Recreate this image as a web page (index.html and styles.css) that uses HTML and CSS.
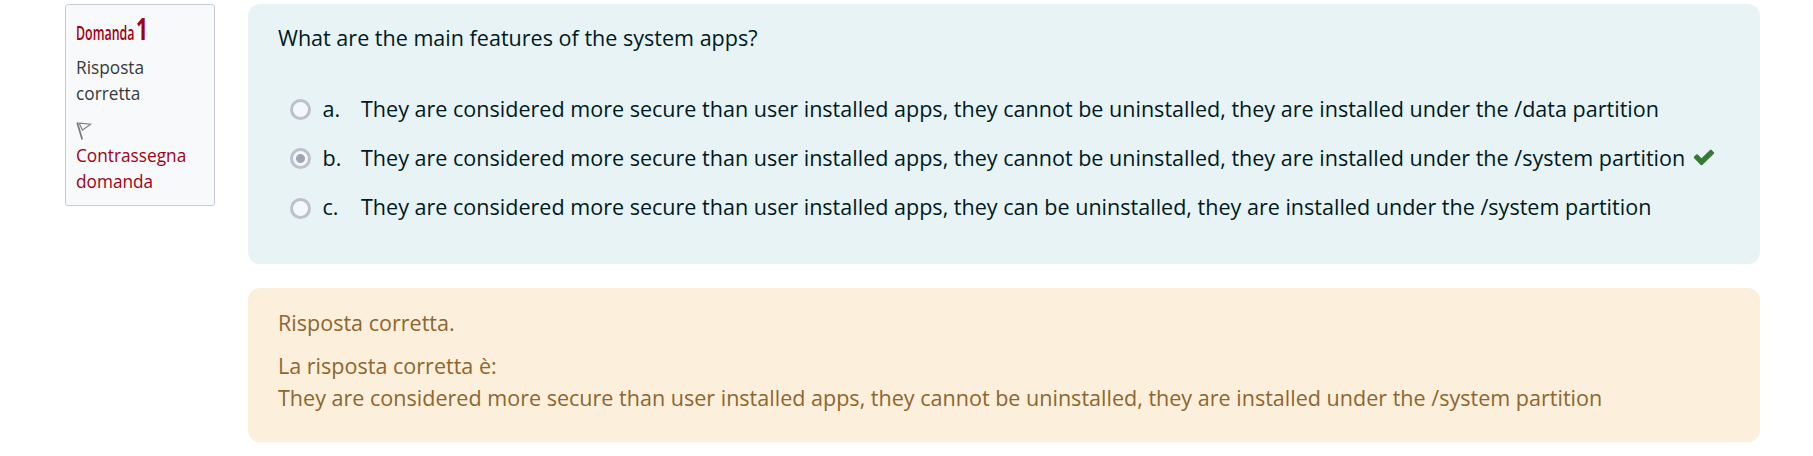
FILE: index.html
```html
<!DOCTYPE html>
<html lang="it">
<head>
<meta charset="utf-8">
<title>Domanda 1</title>
<link rel="stylesheet" href="styles.css">
</head>
<body>
<div class="question">
  <aside class="info">
    <h3 class="number"><span class="label">Domanda</span><span class="digit">1</span></h3>
    <div class="state">Risposta corretta</div>
    <div class="flag">
      <svg class="flag-icon" viewBox="0 0 16 18" width="16" height="18"><path d="M1.200 0.500L6.200 17.500" fill="none" stroke="#777" stroke-width="1.700"/><path d="M3.200 1.200L14.800 2.200L6.400 8Z" fill="none" stroke="#858585" stroke-width="1.200"/></svg>
      <a class="flag-link">Contrassegna domanda</a>
    </div>
  </aside>
  <main class="content">
    <section class="formulation">
      <p class="qtext">What are the main features of the system apps?</p>
      <div class="answers">
        <label class="answer"><span class="radio"></span><span class="letter">a.</span><span class="text">They are considered more secure than user installed apps, they cannot be uninstalled, they are installed under the /data partition</span></label>
        <label class="answer"><span class="radio checked"></span><span class="letter">b.</span><span class="text">They are considered more secure than user installed apps, they cannot be uninstalled, they are installed under the /system partition</span><svg class="check" viewBox="0 0 22 17" width="22" height="17"><path d="M1.200 9.200Q0.400 8.300 1.200 7.500L3.200 5.500Q4 4.800 4.800 5.500L8.500 9.200L17 0.900Q17.800 0.200 18.600 0.900L20.900 3.200Q21.600 4 20.900 4.800L9.300 16Q8.500 16.700 7.700 16Z" fill="#357a32"/></svg></label>
        <label class="answer"><span class="radio"></span><span class="letter">c.</span><span class="text">They are considered more secure than user installed apps, they can be uninstalled, they are installed under the /system partition</span></label>
      </div>
    </section>
    <section class="outcome">
      <p class="feedback">Risposta corretta.</p>
      <p class="right">La risposta corretta è:<br>They are considered more secure than user installed apps, they cannot be uninstalled, they are installed under the /system partition</p>
    </section>
  </main>
</div>
</body>
</html>
```
FILE: styles.css
```css
* { box-sizing: border-box; }
body { margin: 0; background: #fff; font-family: "Open Sans", sans-serif; font-size: 21.56px; line-height: 32px; color: #001a1e; }
p, h3 { margin: 0; }
.question { display: flex; align-items: flex-start; gap: 33px; padding: 4px 53px 0 65px; }
.info { width: 150px; height: 202px; flex: none; border: 1px solid #c5cdd8; border-radius: 3px; background: #f8f9fb; padding: 8px 10px; font-size: 17.25px; line-height: 26px; color: #373a3c; }
.number { display: flex; align-items: baseline; color: #a00014; height: 42px; line-height: 32px; white-space: nowrap; }
.label { font-size: 19.5px; font-weight: 600; transform: scaleX(.635); transform-origin: left; width: 60px; }
.digit { font-size: 30px; font-weight: 700; transform: scaleX(.7); transform-origin: left; }
.flag { margin-top: 15px; }
.flag-icon { display: block; margin-bottom: 3px; }
.flag-link { color: #a00014; }
.content { flex: 1; min-width: 0; }
.formulation { height: 260px; border-radius: 12px; background: #e7f3f5; padding: 18px 30px; }
.answers { margin-top: 30px; padding-left: 12px; }
.answer { display: flex; align-items: center; height: 49px; white-space: nowrap; }
.radio { width: 21px; height: 21px; flex: none; border: 3px solid #bdc1ca; border-radius: 50%; background: #f4f7fb; margin: 2px 11.5px 0 0; }
.answer:last-child .radio { margin-top: 4px; }
.checked { background: radial-gradient(circle, #a2a5b1 4px, #f4f7fb 5px); }
.letter { width: 38.5px; flex: none; }
.check { margin-left: 7.5px; flex: none; }
.outcome { height: 154px; margin-top: 24px; border-radius: 12px; background: #fcefdc; color: #8e662e; padding: 19px 30px; white-space: nowrap; }
.feedback { margin-bottom: 11px; }
```
